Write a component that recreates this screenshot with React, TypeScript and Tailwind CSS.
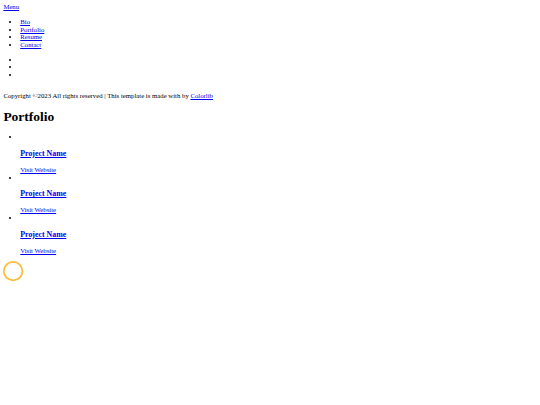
const menu = ['Bio', 'Portfolio', 'Resume', 'Contact'];
const projects = [1, 2, 3];

export default function App() {
  return (
    <div className="min-h-screen bg-white p-[3.375px] font-['Liberation_Serif',serif] text-[6.75px] leading-[1.15] text-black">
      <a href="#" className="text-[#0000ee] underline">Menu</a>
      <nav>
        <ul className="my-[6.75px] list-disc pl-[16.875px]">
          {menu.map((item) => (
            <li key={item}>
              <a href="#" className="text-[#0000ee] underline">{item}</a>
            </li>
          ))}
        </ul>
      </nav>
      <ul className="my-[6.75px] list-disc pl-[16.875px]">
        <li className="h-[1.15em]" />
        <li className="h-[1.15em]" />
        <li className="h-[1.15em]" />
      </ul>
      <p className="mt-[13.2px] mb-[6.75px]">
        Copyright ©2023 All rights reserved | This template is made with by{' '}
        <a href="#" className="text-[#0000ee] underline">Colorlib</a>
      </p>

      <h1 className="my-[9.05px] text-[13.5px] font-bold">Portfolio</h1>
      <ul className="my-[6.75px] list-disc pl-[16.875px]">
        {projects.map((n) => (
          <li key={n}>
            <span className="inline-block" />
            <div>
              <h3 className="my-[7.9px] text-[7.9px] font-bold">
                <a href="#" className="text-[#0000ee] underline">Project Name</a>
              </h3>
              <a href="#" className="text-[#0000ee] underline">Visit Website</a>
            </div>
          </li>
        ))}
      </ul>

      {/* loader */}
      <svg className="block h-[20.25px] w-[20.25px]" viewBox="0 0 48 48">
        <circle cx="24" cy="24" r="22" fill="none" strokeWidth="4" stroke="#eeeeee" />
        <circle cx="24" cy="24" r="22" fill="none" strokeWidth="4" strokeMiterlimit="10" stroke="#ffbd39" />
      </svg>
    </div>
  );
}
